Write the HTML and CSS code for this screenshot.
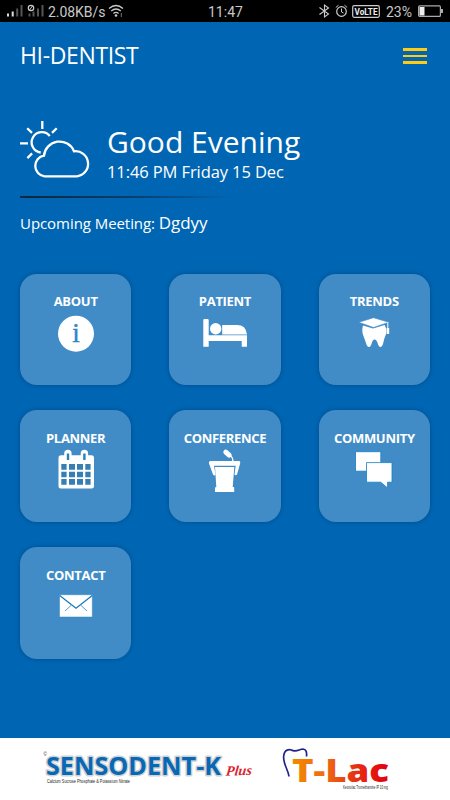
FILE: index.html
```html
<!DOCTYPE html>
<html lang="en">

<head>
    <meta charset="utf-8">
    <title>HI-DENTIST</title>
    <link rel="stylesheet" href="styles.css">
</head>

<body>
    <div class="status-bar">
        <div class="status-left">
            <svg class="signal" width="41" height="22" viewBox="0 0 41 22">
                <path d="M1 13.500v3M5.700 11.500v5" stroke="#ddd" stroke-width="2"/>
                <path d="M10.200 8.500v8M14.500 5v11.500" stroke="#555" stroke-width="2"/>
                <path d="M22.500 13.500v3M26.500 11.500v5M31 8.500v8M35.500 5v11.500" stroke="#555" stroke-width="2"/>
                <circle cx="24" cy="8" r="2.700" fill="none" stroke="#ccc" stroke-width="1.200"/>
                <path d="M22.500 10l3-4" stroke="#ccc"/>
            </svg>
            <span class="speed">2.08KB/s</span>
            <svg width="16" height="22" viewBox="0 0 16 22">
                <path d="M1 8.500Q8 2.500 15 8.500M3.200 11Q8 7 12.800 11M5.400 13.500Q8 11.400 10.600 13.500" fill="none" stroke="#ccc" stroke-width="1.300"/>
                <circle cx="8" cy="15.500" r="1.300" fill="#ccc"/>
                <path d="M13.300 13v4" stroke="#777"/>
            </svg>
        </div>
        <span class="clock">11:47</span>
        <div class="status-right">
            <svg width="11" height="22" viewBox="0 0 11 22">
                <path d="M.5 7.500L9.500 14 5.500 17V5L9.500 8 .5 14.500" fill="none" stroke="#ccc" stroke-width="1.100"/>
            </svg>
            <svg class="alarm" width="13" height="22" viewBox="0 0 13 22">
                <circle cx="6.500" cy="11.500" r="4.800" fill="none" stroke="#ccc" stroke-width="1.200"/>
                <path d="M6.500 8.500v3.500l2 1M.8 7.500L3.500 5.200M12.200 7.500L9.500 5.200" fill="none" stroke="#ccc"/>
            </svg>
            <svg class="volte" width="28" height="22" viewBox="0 0 28 22">
                <rect x=".7" y="5.700" width="26.600" height="11.600" rx="1.500" fill="none" stroke="#ccc" stroke-width="1.200"/>
                <text x="2.500" y="15" textLength="23" lengthAdjust="spacingAndGlyphs">VoLTE</text>
            </svg>
            <span class="percent">23%</span>
            <svg width="25" height="22" viewBox="0 0 25 22">
                <rect x=".6" y="5.900" width="21.800" height="10.500" rx="1" fill="none" stroke="#aaa" stroke-width="1.200"/>
                <rect x="1.500" y="7" width="5" height="8.500" fill="#eee"/>
                <rect x="23" y="9" width="2" height="4" fill="#aaa"/>
            </svg>
        </div>
    </div>

    <div class="header">
        <h1>HI-DENTIST</h1>
        <div class="menu">
            <span></span>
            <span></span>
            <span></span>
        </div>
    </div>

    <div class="greeting">
        <svg class="weather" width="72" height="60" viewBox="0 0 72 60" fill="none" stroke="#fff" stroke-width="2.300">
            <path d="M22.300 1v8M7.200 8.200l4.800 4.700M36.700 8.200l-4.700 4.700M0 23.300h8M7.400 38.100l4.700-4.700"/>
            <path d="M29.800 16A10.200 10.200 0 1 0 20.700 32.500"/>
            <path d="M24.500 56.300H57A12.500 12.500 0 1 0 54 31.300A15.600 15.600 0 0 0 24 35.700A10.400 10.400 0 0 0 24.500 56.300Z"/>
        </svg>
        <div>
            <h2>Good Evening</h2>
            <p class="date">11:46 PM Friday 15 Dec</p>
        </div>
    </div>
    <div class="line"></div>
    <p class="meeting">Upcoming Meeting: <span>Dgdyy</span></p>

    <div class="tiles">
        <div class="tile">
            <h3 class="about">ABOUT</h3>
            <svg width="60" height="46" viewBox="0 0 60 46">
                <circle cx="30" cy="21.700" r="18" fill="#fff"/>
                <text class="info" x="30" y="30" text-anchor="middle">i</text>
            </svg>
        </div>
        <div class="tile">
            <h3 class="patient">PATIENT</h3>
            <svg width="60" height="46" viewBox="0 0 60 46" fill="#fff">
                <path d="M8.300 8.200q0-1.200 1.200-1.200h3q1.200 0 1.200 1.200v15.100H52v11.400h-5.300V29h-33v5.700H8.300z"/>
                <circle cx="20.700" cy="16.700" r="5.700"/>
                <path d="M27.200 13H42q9 0 10 9.400H27.200z"/>
            </svg>
        </div>
        <div class="tile">
            <h3 class="trends">TRENDS</h3>
            <svg width="60" height="46" viewBox="0 0 60 46" fill="#fff">
                <path d="M19 13.500L29 16.500 40.500 13C43.500 18 42.500 22 40.500 26C39.500 29 39 35 36.500 35C33.500 35 34 27.500 30.500 27.500C27.500 27.500 28 35 25 35C22.300 35 21.800 29 20 25.500C18.500 22 17.500 18 19 13.500Z"/>
                <path d="M14.800 10.300L29.500 5.700 44.800 10.300 29.500 15.500Z" stroke="#418cc7" stroke-width=".6"/>
                <path d="M43.800 10v10" stroke="#fff"/>
                <path d="M42.600 16h2.600v6h-2.600z"/>
            </svg>
        </div>
        <div class="tile">
            <h3 class="planner">PLANNER</h3>
            <svg width="60" height="46" viewBox="0 0 60 46">
                <path d="M15 7.300H18.200V5.500a3.700 3.700 0 0 1 7.400 0V7.300H34.700V5.500a3.700 3.700 0 0 1 7.400 0V7.300H45.500q2.500 0 2.500 2.500V38q0 2.500-2.500 2.500H15q-2.500 0-2.500-2.500V9.800q0-2.500 2.500-2.500z" fill="#fff"/>
                <path d="M22 5.500v6.500M38.400 5.500v6.500" stroke="#2a80b9" stroke-width="2.400"/>
                <path d="M15.300 18.900h5.300m2.400 0h6m2 0h6m2.300 0h5.300M15.300 26.500h5.300m2.400 0h6m2 0h6m2.300 0h5.300M15.300 33.900h5.300m2.400 0h6m2 0h6m2.300 0h5.300" stroke="#367fb5" stroke-width="5.700"/>
            </svg>
        </div>
        <div class="tile">
            <h3 class="conference">CONFERENCE</h3>
            <svg width="60" height="46" viewBox="0 0 60 46" fill="#fff">
                <path d="M30.800 4.200l3.400 3" stroke="#fff" stroke-width="5" stroke-linecap="round"/>
                <path d="M35 7.500q3.200 1.800 2.800 6" fill="none" stroke="#fff" stroke-width="1.400"/>
                <path d="M15 13H44.500Q45.800 13.500 45 16L42 26.500Q40.500 28 39.500 26.500L40.700 17.700H19L20.500 26.500Q19.500 28.500 18 26.500L14 15.500Q13.500 13.500 15 13Z"/>
                <path d="M20 18.900H39.300L37.700 39H38.500Q39.200 39 39.200 40V44H20V40Q20 39 21.300 39Z"/>
            </svg>
        </div>
        <div class="tile">
            <h3 class="community">COMMUNITY</h3>
            <svg width="60" height="46" viewBox="0 0 60 46" fill="#fff" stroke="#137fc0" stroke-width=".8">
                <path d="M11.500 3.700h25.300v19.500H11.500z"/>
                <path d="M22.500 14.600h25.500v19.600h-4.400v5.800l-6.900-5.800H22.500z"/>
            </svg>
        </div>
        <div class="tile">
            <h3 class="contact">CONTACT</h3>
            <svg width="60" height="46" viewBox="0 0 60 46" fill="none">
                <path d="M13.500 9.700h32.800V32H13.500z" fill="#fff" stroke="#2686c4" stroke-width=".5"/>
                <path d="M13.700 10.500L30 23.300 46.200 10.500" stroke="#1777b8" stroke-width="1.200"/>
                <path d="M25.500 20l-6.500 6M34.500 20l6.500 6" stroke="#5ca0d0"/>
            </svg>
        </div>
    </div>

    <div class="footer">
        <svg width="450" height="62" viewBox="0 0 450 62">
            <defs>
                <linearGradient id="lac" gradientUnits="userSpaceOnUse" x1="292" y1="0" x2="388" y2="0">
                    <stop offset="0" stop-color="#f28a00"/>
                    <stop offset=".35" stop-color="#ef6a10"/>
                    <stop offset=".65" stop-color="#e63312"/>
                    <stop offset="1" stop-color="#e3000f"/>
                </linearGradient>
            </defs>
            <text class="tiny" x="43.500" y="18">©</text>
            <text class="sensodent" x="46" y="37.200" textLength="175" lengthAdjust="spacingAndGlyphs">SENSODENT-K</text>
            <text class="plus" transform="translate(225.500 37.800) rotate(-2) skewX(-8)" textLength="26" lengthAdjust="spacingAndGlyphs">Plus</text>
            <text class="tiny" x="47" y="44.700" textLength="83" lengthAdjust="spacingAndGlyphs">Calcium Sucrose Phosphate &amp; Potassium Nitrate</text>
            <path d="M289 38.500C288 31 283.500 27 283.600 19C284 11 289 10.500 294.500 13.200M291 12C297 14.500 299 11 303 11C306 11.200 307 14 306.500 18.500" fill="none" stroke="#22238c" stroke-width="1.700"/>
            <text class="lac" x="292" y="44" textLength="97" lengthAdjust="spacingAndGlyphs">T-Lac</text>
            <text class="tiny" x="343" y="50.500" textLength="45" lengthAdjust="spacingAndGlyphs">Ketorolac Tromethamine IP 10 mg</text>
        </svg>
    </div>
</body>

</html>
```
FILE: styles.css
```css
* {
    box-sizing: border-box;
}

body {
    margin: 0;
    width: 450px;
    height: 800px;
    display: flex;
    flex-direction: column;
    overflow: hidden;
    background-color: #0066b3;
    color: #fff;
    font-family: 'Open Sans', 'Noto Sans', sans-serif;
}

h1,
h2,
h3,
p {
    margin: 0;
    font-weight: 400;
    white-space: nowrap;
}

svg {
    display: block;
    flex: none;
}

.status-bar {
    height: 22px;
    padding: 0 7px;
    display: grid;
    grid-template-columns: 201px 1fr auto;
    background-color: #000;
    color: #c8c8c8;
    font: 14px/24px Roboto, sans-serif;
}

.status-left,
.status-right {
    display: flex;
}

.speed {
    width: 60px;
    letter-spacing: -0.05px;
}

.alarm {
    margin-left: 5px;
}

.volte {
    margin: 0 6px 0 4px;
    font: bold 9.5px Roboto, sans-serif;
    fill: #eee;
}

.percent {
    width: 32px;
}

.header {
    height: 66px;
    padding: 0 23px 0 20px;
    display: flex;
    justify-content: space-between;
    align-items: center;
}

h1 {
    font-size: 23px;
    letter-spacing: -0.35px;
}

.menu {
    width: 24px;
    margin-top: 2px;
    display: flex;
    flex-direction: column;
    gap: 4px;
}

.menu span {
    height: 2.5px;
    background-color: #fc1;
}

.greeting {
    height: 108px;
    padding: 32px 20px 0;
    display: flex;
    gap: 15px;
}

h2 {
    font-size: 30px;
    line-height: 41px;
    margin-top: 1px;
}

.date {
    font-size: 16.5px;
    line-height: 20px;
    letter-spacing: -0.1px;
}

.line {
    width: 215px;
    height: 2px;
    margin-left: 20px;
    background: linear-gradient(to right, #12253c, #0c3d6c 50%, #0066b3);
}

.meeting {
    height: 76px;
    padding: 13px 20px 0;
    font-size: 15px;
    line-height: 24px;
    letter-spacing: -0.06px;
}

.meeting span {
    font-size: 17px;
}

.tiles {
    flex: 1;
    padding: 0 20px;
    display: grid;
    grid-template-columns: repeat(3, 1fr);
    grid-template-rows: 111px 112px 112px;
    gap: 25px 38px;
}

.tile {
    padding-top: 19px;
    display: flex;
    flex-direction: column;
    align-items: center;
    border-radius: 17px;
    background-color: #418cc7;
    box-shadow: 0 0 5px rgba(0, 40, 90, 0.4);
}

h3 {
    height: 19px;
    font-size: 13px;
    line-height: 17px;
    font-weight: 700;
    letter-spacing: -0.3px;
}

.planner,
.conference,
.community,
.contact {
    line-height: 18px;
}

.info {
    font: 27px 'Liberation Serif', serif;
    fill: #2e86c4;
    stroke: #2e86c4;
    stroke-width: 0.4px;
}

.footer {
    height: 62px;
    background-color: #fff;
}

.sensodent {
    font: bold 25px 'Open Sans', sans-serif;
    fill: #0868b4;
    stroke: #d2d2d2;
    stroke-width: 3px;
    stroke-linejoin: round;
    paint-order: stroke;
}

.plus {
    font: italic bold 14px 'Liberation Serif', serif;
    fill: #d9232e;
}

.lac {
    font: 800 32px 'Open Sans', sans-serif;
    fill: url(#lac);
}

.tiny {
    font-family: 'Liberation Sans', sans-serif;
    font-size: 4.5px;
    fill: #222;
}
```
